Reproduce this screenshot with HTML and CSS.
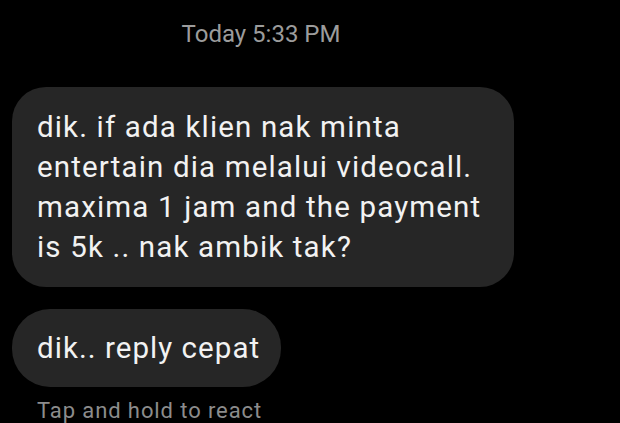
FILE: index.html
```html
<!DOCTYPE html>
<html>
<head>
<meta charset="utf-8">
<link rel="stylesheet" href="styles.css">
</head>
<body>
<div class="chat">
  <div class="stamp">Today 5:33 PM</div>
  <div class="bubble bubble--wide">dik. if ada klien nak minta<br>entertain dia melalui videocall.<br>maxima 1 jam and the payment<br>is 5k .. nak ambik tak?</div>
  <div class="bubble">dik.. reply cepat</div>
  <div class="hint">Tap and hold to react</div>
</div>
</body>
</html>
```
FILE: styles.css
```css
html, body {
  margin: 0;
  padding: 0;
  background: #000;
  height: 100%;
  overflow: hidden;
}
.chat {
  display: flex;
  flex-direction: column;
  align-items: flex-start;
  padding: 19px 0 0 12px;
  font-family: Roboto, "Liberation Sans", sans-serif;
}
.stamp {
  width: 498px;
  text-align: center;
  color: #9c9c9c;
  font-size: 24px;
  line-height: 30px;
  margin-bottom: 38px;
}
.bubble {
  background: #262626;
  color: #f2f2f2;
  font-size: 29.5px;
  letter-spacing: 1.05px;
  line-height: 40px;
  padding: 19px 21px 19px 25px;
  border-radius: 38px;
  box-sizing: border-box;
  white-space: nowrap;
  width: fit-content;
}
.bubble--wide {
  width: 502px;
  letter-spacing: 1.15px;
  padding: 20px 25px 20px 25px;
  border-radius: 34px;
  margin-bottom: 22px;
}
.hint {
  color: #8c8c8c;
  font-size: 22px;
  letter-spacing: 0.9px;
  line-height: 28px;
  margin: 10px 0 0 25px;
}
```
